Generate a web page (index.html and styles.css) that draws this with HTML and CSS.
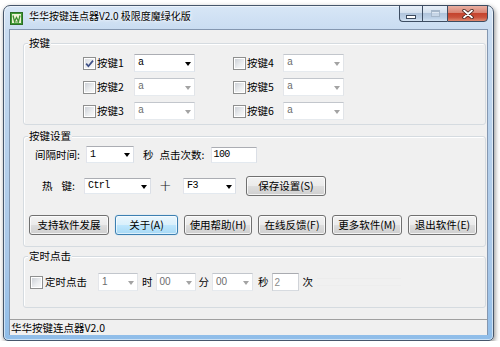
FILE: index.html
```html
<!DOCTYPE html>
<html lang="zh-CN">
<head>
<meta charset="utf-8">
<title>华华按键连点器V2.0</title>
<link rel="stylesheet" href="styles.css">
</head>
<body>
<div class="window">
  <div class="titlebar">
    <svg class="app-icon" viewBox="0 0 13 13" width="13" height="13">
      <rect x="0.5" y="0.5" width="12" height="12" fill="#3f9a34" stroke="#2c6e25"/>
      <rect x="2" y="2" width="9" height="9" fill="#eef2d6"/>
      <path d="M3 3.5 L4.5 9.5 L6.5 5.5 L8.5 9.5 L10 3.5" fill="none" stroke="#3f8f30" stroke-width="1.3"/>
      <path d="M4 10 L9 10" stroke="#3f8f30" stroke-width="1"/>
    </svg>
    <span class="title">华华按键连点器V2.0 极限度魔绿化版</span>
    <div class="caption">
      <div class="cbtn cmin"><span class="min-glyph"></span></div>
      <div class="cbtn cmax"><span class="max-glyph"></span></div>
      <div class="cbtn cclose">
        <svg viewBox="0 0 12 10" width="12" height="10">
          <path d="M2 1.5 L10 8.5 M10 1.5 L2 8.5" stroke="#3a1a14" stroke-width="3.4" stroke-linecap="round"/>
          <path d="M2 1.5 L10 8.5 M10 1.5 L2 8.5" stroke="#ffffff" stroke-width="1.8" stroke-linecap="round"/>
        </svg>
      </div>
    </div>
  </div>

  <div class="client">
    <div class="group g1">
      <div class="group-title">按键</div>
      <div class="keys">
        <div class="key-item">
          <label class="check-label"><span class="check checked"><svg viewBox="0 0 11 11" width="11" height="11"><path d="M2.2 5.6 L4.4 8.2 L9 2.6" fill="none" stroke="#3d4f86" stroke-width="1.7"/></svg></span><span class="key-text">按键1</span></label>
          <div class="combo"><span class="combo-val mono">a</span><span class="arrow"></span></div>
        </div>
        <div class="key-item">
          <label class="check-label"><span class="check"></span><span class="key-text">按键4</span></label>
          <div class="combo disabled"><span class="combo-val mono">a</span><span class="arrow"></span></div>
        </div>
        <div class="key-item">
          <label class="check-label"><span class="check"></span><span class="key-text">按键2</span></label>
          <div class="combo disabled"><span class="combo-val mono">a</span><span class="arrow"></span></div>
        </div>
        <div class="key-item">
          <label class="check-label"><span class="check"></span><span class="key-text">按键5</span></label>
          <div class="combo disabled"><span class="combo-val mono">a</span><span class="arrow"></span></div>
        </div>
        <div class="key-item">
          <label class="check-label"><span class="check"></span><span class="key-text">按键3</span></label>
          <div class="combo disabled"><span class="combo-val mono">a</span><span class="arrow"></span></div>
        </div>
        <div class="key-item">
          <label class="check-label"><span class="check"></span><span class="key-text">按键6</span></label>
          <div class="combo disabled"><span class="combo-val mono">a</span><span class="arrow"></span></div>
        </div>
      </div>
    </div>

    <div class="group g2">
      <div class="group-title">按键设置</div>
      <div class="row interval">
        <span class="lbl w-interval">间隔时间:</span>
        <div class="combo w48"><span class="combo-val mono">1</span><span class="arrow"></span></div>
        <span class="lbl ml9">秒</span>
        <span class="lbl ml6 w-count">点击次数:</span>
        <div class="edit w46"><span class="mono">100</span></div>
      </div>
      <div class="row hotkey">
        <span class="lbl hk-label"><span>热</span><span>键:</span></span>
        <div class="combo w67"><span class="combo-val mono">Ctrl</span><span class="arrow"></span></div>
        <span class="plus">+</span>
        <div class="combo w53 ml14"><span class="combo-val mono">F3</span><span class="arrow"></span></div>
        <div class="btn w80 ml10">保存设置(S)</div>
      </div>
      <div class="row buttons">
        <div class="btn w80">支持软件发展</div>
        <div class="btn default w63">关于(A)</div>
        <div class="btn w68">使用帮助(H)</div>
        <div class="btn w68">在线反馈(F)</div>
        <div class="btn w70">更多软件(M)</div>
        <div class="btn w69">退出软件(E)</div>
      </div>
    </div>

    <div class="group g3">
      <div class="group-title">定时点击</div>
      <div class="row timer">
        <span class="check"></span>
        <span class="lbl ml2 w-timer">定时点击</span>
        <div class="combo disabled w40 ml9"><span class="combo-val sans">1</span><span class="arrow"></span></div>
        <span class="lbl ml4">时</span>
        <div class="combo disabled w40 ml3"><span class="combo-val sans">00</span><span class="arrow"></span></div>
        <span class="lbl ml3">分</span>
        <div class="combo disabled w41 ml3"><span class="combo-val sans">00</span><span class="arrow"></span></div>
        <span class="lbl ml5">秒</span>
        <div class="edit disabled w27 ml3"><span class="sans">2</span></div>
        <span class="lbl ml4">次</span>
        <div class="ghost ml4"></div>
      </div>
    </div>

    <div class="statusbar">华华按键连点器V2.0</div>
  </div>
</div>
</body>
</html>
```

FILE: styles.css
```css
* { box-sizing: border-box; }

body {
  margin: 0;
  background: #ffffff;
  font-family: "Noto Sans CJK SC", "Noto Sans", sans-serif;
  font-size: 10.5px;
  color: #000;
}

.window {
  width: 491px;
  height: 336px;
  margin: 5px 0 0 3px;
  border: 1px solid #46566b;
  border-radius: 7px 7px 5px 5px;
  background: linear-gradient(180deg, #d7e6f6 0px, #c9dcf1 24px, #b9d2ec 120px, #a8c7e8 260px, #8fbde9 100%);
  box-shadow: 1px 2px 5px rgba(0, 0, 0, 0.45), inset 0 0 0 1px rgba(255, 255, 255, 0.55);
  padding: 0 5px 5px;
  display: flex;
  flex-direction: column;
}

/* title bar */
.titlebar {
  height: 23px;
  display: flex;
  align-items: flex-start;
  flex: none;
}
.app-icon {
  margin: 6px 0 0 1px;
  flex: none;
}
.title {
  margin: 3px 0 0 6px;
  font-size: 10px;
  line-height: 14px;
  color: #000;
  text-shadow: 0 0 5px #fff, 0 0 3px #fff;
  white-space: nowrap;
}
.caption {
  margin-left: auto;
  margin-top: -1px;
  display: flex;
}
.cbtn {
  height: 17px;
  border: 1px solid #3d4d62;
  border-right: none;
  display: flex;
  align-items: center;
  justify-content: center;
}
.cmin {
  width: 23px;
  border-radius: 0 0 0 4px;
  background: linear-gradient(180deg, #e9f0f8 0%, #d3e0ee 45%, #b1c5dc 50%, #bcd0e6 80%, #d4e4f4 100%);
}
.cmax {
  width: 25px;
  background: linear-gradient(180deg, #e9f0f8 0%, #d3e0ee 45%, #b1c5dc 50%, #bcd0e6 80%, #d4e4f4 100%);
}
.cclose {
  width: 41px;
  border-right: 1px solid #3d4d62;
  border-radius: 0 0 4px 0;
  background: linear-gradient(180deg, #eab0a2 0%, #d98473 45%, #c5442e 50%, #c9523c 75%, #e08a70 100%);
}
.min-glyph {
  width: 10px;
  height: 4px;
  margin-top: 6px;
  background: #fff;
  border: 1px solid #3b4a5e;
}
.max-glyph {
  width: 9px;
  height: 7px;
  border: 1px solid #a6b7ca;
  border-top-width: 2px;
  background: rgba(255, 255, 255, 0.25);
}

/* client */
.client {
  flex: 1;
  background: #f0f0f0;
  border: 1px solid #8497b0;
  border-bottom: none;
  display: flex;
  flex-direction: column;
}

.group {
  border: 1px solid #d5dbe0;
  border-radius: 3px;
  box-shadow: inset 1px 1px 0 #fff;
  margin-left: 13px;
  width: 463px;
  flex: none;
}
.g1 { margin-top: 13px; height: 82px; }
.g2 { margin-top: 11px; height: 111px; }
.g3 { margin-top: 9px; height: 52px; }

.group-title {
  margin: -8px 0 0 4px;
  padding: 0 1px;
  width: max-content;
  line-height: 14px;
  background: #f0f0f0;
}

/* keys grid */
.keys {
  display: grid;
  grid-template-columns: 112px 111px;
  grid-auto-rows: 18px;
  column-gap: 38px;
  row-gap: 6px;
  margin: 4px 0 0 59px;
}
.key-item {
  display: flex;
  align-items: center;
}
.check-label {
  flex: 1;
  display: flex;
  align-items: center;
}
.key-text {
  margin-left: 1px;
  line-height: 14px;
}

.check {
  width: 13px;
  height: 13px;
  flex: none;
  border: 1px solid #8e8f8f;
  padding: 1px;
  background: linear-gradient(135deg, #cdd1d7 0%, #eceef0 60%, #f8f8f8 100%) content-box, #ffffff;
  display: flex;
  align-items: center;
  justify-content: center;
}
.check.checked {
  padding: 0;
  background: linear-gradient(135deg, #d9dce1 0%, #f2f3f4 70%, #fbfbfb 100%) content-box, #ffffff;
  box-shadow: inset 0 0 0 1px #fff;
}

/* combos / edits */
.combo {
  width: 61px;
  height: 18px;
  background: #fff;
  border: 1px solid #abadb3;
  border-color: #abadb3 #dbdfe6 #e3e9ef #e2e3ea;
  display: flex;
  align-items: center;
  padding: 0 3px 0 3px;
  flex: none;
}
.combo .combo-val {
  flex: 1;
  line-height: 14px;
  color: #000;
}
.combo .arrow {
  width: 0;
  height: 0;
  border-left: 3.5px solid transparent;
  border-right: 3.5px solid transparent;
  border-top: 4px solid #000;
  margin-top: 1px;
}
.combo.disabled {
  border-color: #c2c6cc #e1e4e8 #e6eaee #e4e6ea;
}
.combo.disabled .combo-val { color: #6d6d6d; }
.combo.disabled .arrow { border-top-color: #a3a3a3; }

.edit {
  height: 16px;
  background: #fff;
  border: 1px solid #abadb3;
  border-color: #abadb3 #dbdfe6 #e3e9ef #e2e3ea;
  display: flex;
  align-items: center;
  padding: 0 2px;
  flex: none;
}
.edit.disabled {
  height: 18px;
  border-color: #a9abb0 #d0d3d8 #d7dbe0 #c8cbd0;
  color: #8a8a8a;
}

.mono {
  font-family: "Liberation Mono", monospace;
  font-size: 10px;
  letter-spacing: -0.6px;
}
.sans {
  font-family: "Liberation Sans", Arial, sans-serif;
  font-size: 10px;
  color: #8a8a8a;
}

/* rows */
.row {
  display: flex;
  align-items: center;
}
.interval { height: 17px; margin: 3px 0 0 11px; }
.interval .combo { height: 17px; }
.hotkey { height: 20px; margin: 13px 0 0 18px; }
.hotkey .combo { height: 16px; }
.buttons { height: 20px; margin: 19px 0 0 5px; gap: 6px; }
.timer { height: 18px; margin: 10px 0 0 6px; }

.lbl { line-height: 14px; white-space: nowrap; flex: none; }
.w-interval { width: 51px; }
.w-count { width: 51px; }
.w-timer { width: 44px; }
.hk-label {
  width: 42px;
  display: flex;
  gap: 9px;
}
.plus {
  margin-left: 8px;
  width: 10px;
  font-family: "DejaVu Sans", sans-serif;
  font-size: 15px;
  line-height: 16px;
  text-align: center;
  font-weight: 200;
  color: #222;
}

.w27 { width: 27px; }
.w40 { width: 40px; }
.w41 { width: 41px; }
.w46 { width: 46px; }
.w48 { width: 48px; }
.w53 { width: 53px; }
.w63 { width: 63px; }
.w67 { width: 67px; }
.w68 { width: 68px; }
.w69 { width: 69px; }
.w70 { width: 70px; }
.w80 { width: 80px; }
.ml2 { margin-left: 2px; }
.ml3 { margin-left: 3px; }
.ml4 { margin-left: 4px; }
.ml5 { margin-left: 5px; }
.ml6 { margin-left: 6px; }
.ml9 { margin-left: 9px; }
.ml10 { margin-left: 10px; }
.ml14 { margin-left: 14px; }

/* buttons */
.btn {
  height: 20px;
  flex: none;
  border: 1px solid #707070;
  border-radius: 3px;
  background: linear-gradient(180deg, #f2f2f2 0%, #ebebeb 48%, #dddddd 52%, #cfcfcf 100%);
  box-shadow: inset 0 0 0 1px rgba(255, 255, 255, 0.75);
  display: flex;
  align-items: center;
  justify-content: center;
  line-height: 14px;
  white-space: nowrap;
  font-size: 10.5px;
}
.btn.default {
  border-color: #3c7fb1;
  background: linear-gradient(180deg, #eaf6fd 0%, #d9f0fc 48%, #bee6fd 52%, #a7d9f5 100%);
  box-shadow: inset 0 0 0 1px rgba(255, 255, 255, 0.6), 0 0 1px #7ec4ea;
}

.ghost {
  width: 84px;
  height: 8px;
  border-top: 1px solid #ececec;
  border-bottom: 1px solid #ededed;
}

/* status bar */
.statusbar {
  margin-top: auto;
  height: 16px;
  border-top: 1px solid #a0a0a0;
  padding: 0 0 0 1px;
  line-height: 15px;
  flex: none;
}
```
